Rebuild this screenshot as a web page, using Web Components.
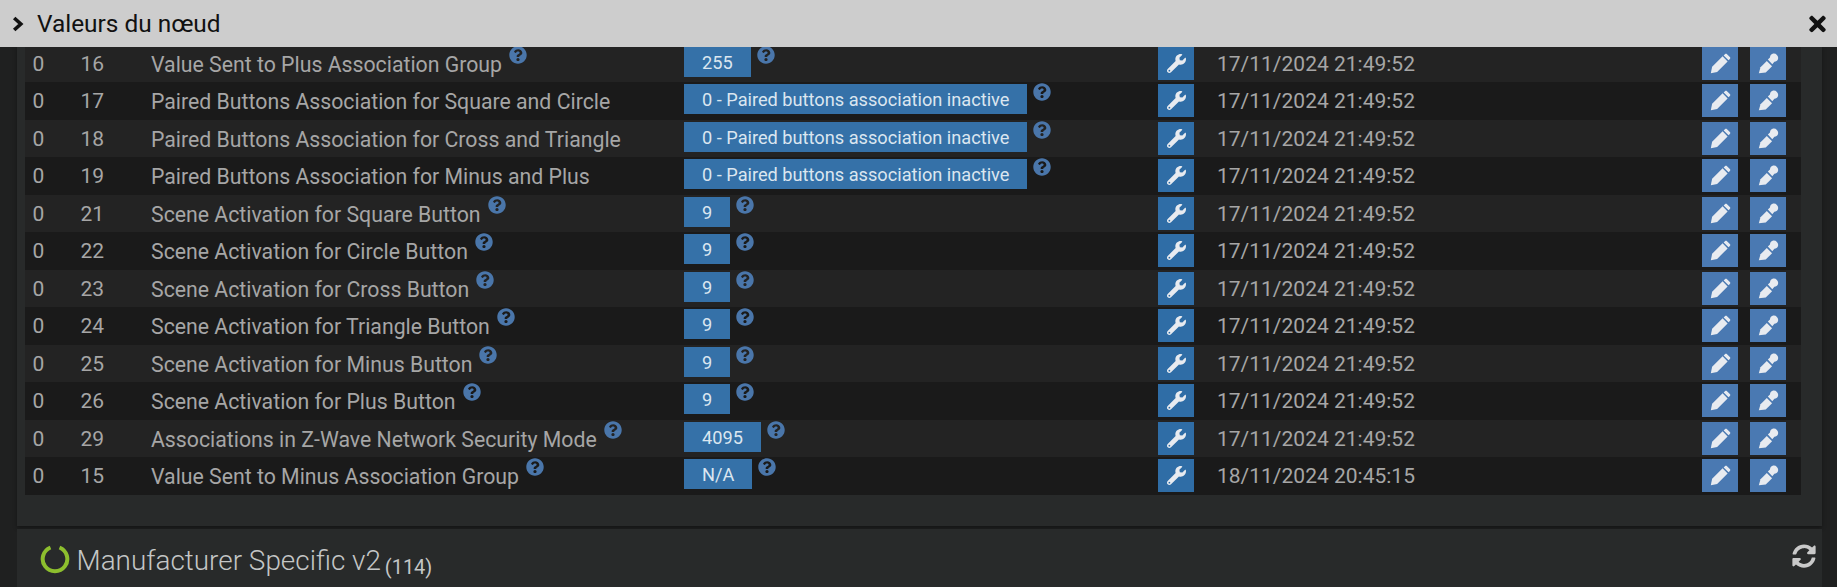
<!DOCTYPE html>
<html lang="fr"><head><meta charset="utf-8"><title>Valeurs du nœud</title>
<style>
html,body{margin:0;height:587px;overflow:hidden;background:#1f2020;font-family:Roboto,"Liberation Sans",sans-serif}
</style></head><body>
<zw-app></zw-app>
<script>
const P={
 help:'M504 256c0 136.997-111.043 248-248 248S8 392.997 8 256C8 119.083 119.043 8 256 8s248 111.083 248 248zM262.655 90c-54.497 0-89.255 22.957-116.549 63.758-3.536 5.286-2.353 12.415 2.715 16.258l34.699 26.31c5.205 3.947 12.621 3.008 16.665-2.122 17.864-22.658 30.113-35.797 57.303-35.797 20.429 0 45.698 13.148 45.698 32.958 0 14.976-12.363 22.667-32.534 33.976C247.128 238.528 216 254.941 216 296v4c0 6.627 5.373 12 12 12h56c6.627 0 12-5.373 12-12v-1.333c0-28.462 83.186-29.647 83.186-106.667 0-58.002-60.165-102-116.531-102zM256 338c-25.365 0-46 20.635-46 46 0 25.364 20.635 46 46 46s46-20.636 46-46c0-25.365-20.635-46-46-46z',
 wrench:'M507.73 109.1c-2.24-9.03-13.54-12.09-20.12-5.51l-74.36 74.36-67.88-11.31-11.31-67.88 74.36-74.36c6.62-6.62 3.43-17.9-5.66-20.16-47.38-11.74-99.55.91-136.58 37.93-39.64 39.64-50.55 97.1-34.05 147.2L18.74 402.76c-24.99 24.99-24.99 65.51 0 90.5 24.99 24.99 65.51 24.99 90.5 0l213.21-213.21c50.12 16.71 107.47 5.68 147.37-34.22 37.07-37.07 49.7-89.32 37.91-136.73zM64 472c-13.25 0-24-10.75-24-24 0-13.26 10.75-24 24-24s24 10.74 24 24c0 13.25-10.75 24-24 24z',
 sync:'M370.72 133.28C339.458 104.008 298.888 87.962 255.848 88c-77.458.068-144.328 53.178-162.791 126.85-1.344 5.363-6.122 9.15-11.651 9.15H24.103c-7.498 0-13.194-6.807-11.807-14.176C33.933 94.924 134.813 8 256 8c66.448 0 126.791 26.136 171.315 68.685L463.03 40.97C478.149 25.851 504 36.559 504 57.941V192c0 13.255-10.745 24-24 24H345.941c-21.382 0-32.09-25.851-16.971-40.971l41.75-41.749zM32 296h134.059c21.382 0 32.09 25.851 16.971 40.971l-41.75 41.75c31.262 29.273 71.835 45.319 114.876 45.28 77.418-.07 144.315-53.144 162.787-126.849 1.344-5.363 6.122-9.15 11.651-9.15h57.304c7.498 0 13.194 6.807 11.807 14.176C478.067 417.076 377.187 504 256 504c-66.448 0-126.791-26.136-171.315-68.685L48.97 471.03C33.851 486.149 8 475.441 8 454.059V320c0-13.255 10.745-24 24-24z',
 times:'M242.72 256l100.07-100.07c12.28-12.28 12.28-32.19 0-44.48l-22.24-22.24c-12.28-12.28-32.19-12.28-44.48 0L176 189.28 75.93 89.21c-12.28-12.28-32.19-12.28-44.48 0L9.21 111.45c-12.28 12.28-12.28 32.19 0 44.48L109.28 256 9.21 356.07c-12.28 12.28-12.28 32.19 0 44.48l22.24 22.24c12.28 12.28 32.2 12.28 44.48 0L176 322.72l100.07 100.07c12.28 12.28 32.2 12.28 44.48 0l22.24-22.24c12.28-12.28 12.28-32.19 0-44.48L242.72 256z'
};
const helpSvg=`<svg class="help" viewBox="0 0 512 512" width="18" height="18"><path fill="#4a76aa" d="${P.help}"/></svg>`;
const pencil=`<svg viewBox="0 0 20 20" width="21" height="21"><path fill="#e8ebf0" d="M.8 19.2l1.2-6 10-10 4.8 4.8-10 10z"/><path fill="#e8ebf0" d="M13 2.3l1.2-1.2c.6-.6 1.4-.6 2 0l2.7 2.7c.6.6.6 1.4 0 2L17.7 7z"/></svg>`;
const pen=`<svg viewBox="0 0 20 20" width="21" height="21"><path fill="#e8ebf0" d="M.8 19.2l1.6-5.6 6-6 5 5-6 6z"/><path fill="#e8ebf0" d="M9.4 6.2l2-2c.2-1.6 1.1-2.9 2.5-3.4 1.5-.5 3-.1 4.1 1 1.1 1.1 1.5 2.7 1 4.1-.5 1.4-1.8 2.3-3.4 2.5l-2 2.3z"/></svg>`;
const wrench=`<svg viewBox="0 0 512 512" width="19" height="19"><path fill="#e8ebf0" d="${P.wrench}"/></svg>`;

customElements.define('zw-header',class extends HTMLElement{constructor(){super();this.attachShadow({mode:'open'}).innerHTML=`<style>
:host{display:flex;align-items:center;height:47px;background:#cdcdcd;color:#111;font-size:24.4px;padding:0 11px 0 12px;box-sizing:border-box;position:relative;z-index:2}
.t{flex:1;margin-left:13px}
svg{display:block}
</style><svg width="12" height="16" viewBox="0 0 12 16"><path d="M2.2 2l6.6 6-6.6 6" fill="none" stroke="#111" stroke-width="3.6"/></svg><span class="t"><slot></slot></span><svg viewBox="0 0 352 512" width="17" height="24"><path fill="#111" d="${P.times}"/></svg>`;}});

customElements.define('zw-row',class extends HTMLElement{constructor(){super();const a=n=>this.getAttribute(n);this.attachShadow({mode:'open'}).innerHTML=`<style>
:host{display:grid;grid-template-columns:48px 70px 533px 474px 59px 485px 48px 59px;height:37.5px;background:#232323;color:#a6a6a6;font-size:21px;line-height:39px}
:host([odd]){background:#1a1a1a}
.c{padding-left:8px;white-space:nowrap;min-width:0}
.n{padding-left:7.5px}
.f{display:flex;align-items:flex-start}
.name{font-size:21.27px}
.help{flex:none;margin:1px 0 0 7px}
.val{display:inline-block;background:#3571a8;color:#dbe6f0;height:30px;line-height:31px;padding:0 18px;margin-top:2px;font-size:18.2px}
.val+.help{margin-left:6px}
.b{display:flex;align-items:center;justify-content:center;width:36px;height:33px;margin-top:2px;background:#4a79b2}
.w{background:#2f6da6}
</style><div class="c n">${a('a')}</div><div class="c n">${a('b')}</div>
<div class="c f"><span class="name">${a('name')}</span>${helpSvg}</div>
<div class="c f"><span class="val">${a('val')}</span>${helpSvg}</div>
<div class="c"><div class="b w">${wrench}</div></div>
<div class="c">${a('date')}</div>
<div class="c"><div class="b">${pencil}</div></div>
<div class="c"><div class="b">${pen}</div></div>`;
if(a('plain')!==null)this.shadowRoot.querySelector('.c.f .help').style.display='none';}});

customElements.define('zw-panel',class extends HTMLElement{constructor(){super();this.attachShadow({mode:'open'}).innerHTML=`<style>
:host{display:block;width:1805px;margin-left:17px;background:#282a2a;padding:0 21px 0 8px;box-sizing:border-box;box-shadow:0 2px 4px rgba(0,0,0,.35)}
</style><slot></slot>`;}});

customElements.define('zw-section',class extends HTMLElement{constructor(){super();this.attachShadow({mode:'open'}).innerHTML=`<style>
:host{display:flex;align-items:center;width:1805px;height:59px;margin:3px 0 0 17px;box-sizing:border-box;background:#282a2a;color:#c4c6c6;padding:0 6px 0 22.5px}
svg{display:block;flex:none}
.t{font-size:27.9px;font-weight:300;margin:4px 0 0 7px;white-space:nowrap}
.s{flex:1}
</style><svg width="30" height="30" viewBox="0 0 30 30" style="margin-top:2px"><path d="M10.5 3.5A12.3 12.3 0 1 0 19.5 3.5" fill="none" stroke="#8dbf2e" stroke-width="4"/></svg>
<span class="t"><slot></slot></span><span class="s"></span>
<svg viewBox="0 0 512 512" width="24" height="24" style="margin-top:-4px"><path fill="#c9c9c9" d="${P.sync}"/></svg>`;}});

customElements.define('zw-app',class extends HTMLElement{constructor(){super();
const d1='17/11/2024 21:49:52',pb='0 - Paired buttons association inactive';
const rows=[['16','Value Sent to Plus Association Group','255',d1],
['17','Paired Buttons Association for Square and Circle',pb,d1,1],
['18','Paired Buttons Association for Cross and Triangle',pb,d1,1],
['19','Paired Buttons Association for Minus and Plus',pb,d1,1],
['21','Scene Activation for Square Button','9',d1],
['22','Scene Activation for Circle Button','9',d1],
['23','Scene Activation for Cross Button','9',d1],
['24','Scene Activation for Triangle Button','9',d1],
['25','Scene Activation for Minus Button','9',d1],
['26','Scene Activation for Plus Button','9',d1],
['29','Associations in Z-Wave Network Security Mode','4095',d1],
['15','Value Sent to Minus Association Group','N/A','18/11/2024 20:45:15']];
this.attachShadow({mode:'open'}).innerHTML=`<style>
:host{display:block;height:587px;overflow:hidden}
.scroll{height:540px;overflow:hidden}
.inner{margin-top:-2.5px}
zw-panel{padding-bottom:31px}
small{font-size:20px;font-weight:400;margin-left:-3px;position:relative;top:4px}
</style>
<zw-header>Valeurs du nœud</zw-header>
<div class="scroll"><div class="inner"><zw-panel>${rows.map((r,i)=>`<zw-row a="0" b="${r[0]}" name="${r[1]}" val="${r[2]}" date="${r[3]}" ${i%2?'odd':''} ${r[4]?'plain':''}></zw-row>`).join('')}</zw-panel>
<zw-section>Manufacturer Specific v2 <small>(114)</small></zw-section></div></div>`;}});
</script></body></html>
